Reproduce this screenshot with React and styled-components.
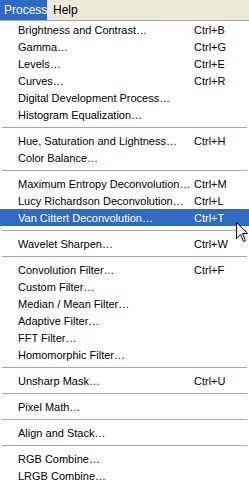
import React from 'react';
import styled, { createGlobalStyle } from 'styled-components';

const GlobalStyle = createGlobalStyle`
  html, body {
    margin: 0;
    padding: 0;
    background: #fff;
  }
  body {
    font-family: Tahoma, "Liberation Sans", Arial, sans-serif;
    font-size: 11px;
  }
`;

const Page = styled.div`
  position: relative;
  width: 249px;
  height: 486px;
  overflow: hidden;
  background: #fff;
`;

const MenuBar = styled.div`
  display: flex;
  height: 20px;
  background: #ece9d8;
  border-bottom: 1px solid #aca899;
`;

const BarItem = styled.div`
  display: flex;
  align-items: center;
  padding: 0 4px 0 4px;
  width: ${(p) => (p.$active ? '39px' : 'auto')};
  margin-right: ${(p) => (p.$active ? '2px' : '0')};
  font-family: "Liberation Sans", Arial, sans-serif;
  font-size: 12px;
  color: ${(p) => (p.$active ? '#fff' : '#000')};
  background: ${(p) => (p.$active ? '#316ac5' : 'transparent')};
`;

const Menu = styled.div`
  display: flex;
  flex-direction: column;
`;

const Item = styled.div`
  display: grid;
  grid-template-columns: 176px 1fr;
  align-items: center;
  height: 17px;
  padding-left: 18px;
  font-family: "Liberation Sans", Arial, sans-serif;
  font-size: 11px;
  color: ${(p) => (p.$hover ? '#fff' : '#000')};
  background: ${(p) => (p.$hover ? '#316ac5' : 'transparent')};
  white-space: nowrap;
`;

const Shortcut = styled.span``;

const Separator = styled.div`
  height: 9px;
  display: flex;
  align-items: center;
  padding: 0 2px;

  &::after {
    content: '';
    flex: 1;
    height: 1px;
    background: #aca899;
  }
`;

const Cursor = styled.svg`
  position: absolute;
  left: 236px;
  top: 222px;
`;

const groups = [
  [
    ['Brightness and Contrast…', 'Ctrl+B'],
    ['Gamma…', 'Ctrl+G'],
    ['Levels…', 'Ctrl+E'],
    ['Curves…', 'Ctrl+R'],
    ['Digital Development Process…'],
    ['Histogram Equalization…'],
  ],
  [
    ['Hue, Saturation and Lightness…', 'Ctrl+H'],
    ['Color Balance…'],
  ],
  [
    ['Maximum Entropy Deconvolution…', 'Ctrl+M'],
    ['Lucy Richardson Deconvolution…', 'Ctrl+L'],
    ['Van Cittert Deconvolution…', 'Ctrl+T', true],
  ],
  [['Wavelet Sharpen…', 'Ctrl+W']],
  [
    ['Convolution Filter…', 'Ctrl+F'],
    ['Custom Filter…'],
    ['Median / Mean Filter…'],
    ['Adaptive Filter…'],
    ['FFT Filter…'],
    ['Homomorphic Filter…'],
  ],
  [['Unsharp Mask…', 'Ctrl+U']],
  [['Pixel Math…']],
  [['Align and Stack…']],
  [
    ['RGB Combine…'],
    ['LRGB Combine…'],
  ],
];

function App() {
  return (
    <Page>
      <GlobalStyle />
      <MenuBar>
        <BarItem $active>Process</BarItem>
        <BarItem>Help</BarItem>
      </MenuBar>
      <Menu>
        {groups.map((group, gi) => (
          <React.Fragment key={gi}>
            {gi > 0 && <Separator />}
            {group.map(([label, key, hover]) => (
              <Item key={label} $hover={hover}>
                <span>{label}</span>
                <Shortcut>{key}</Shortcut>
              </Item>
            ))}
          </React.Fragment>
        ))}
      </Menu>
      <Cursor width="13" height="21" viewBox="0 0 13 21">
        <path
          d="M0.5 0.5 L0.5 16.5 L4.5 12.5 L7.5 19.5 L9.5 18.5 L6.5 11.5 L11.5 11.5 Z"
          fill="#fff"
          stroke="#000"
          strokeWidth="1"
        />
      </Cursor>
    </Page>
  );
}

export default App;
